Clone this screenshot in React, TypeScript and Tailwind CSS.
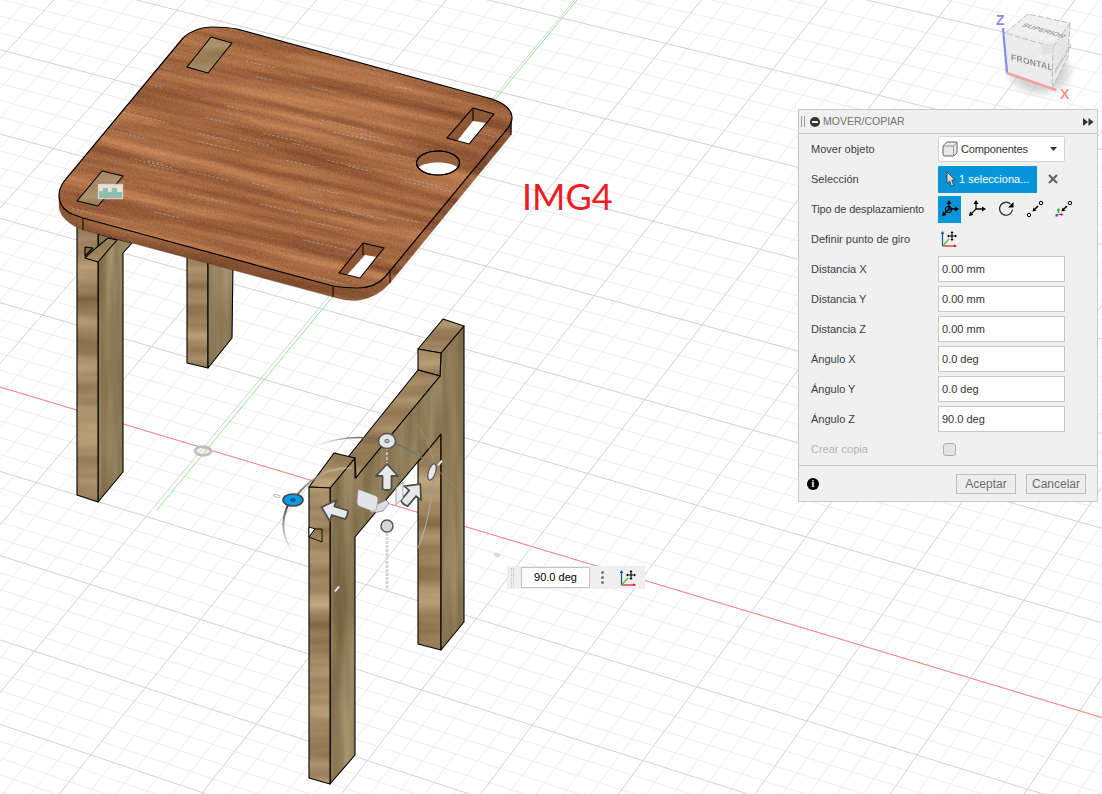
import React from "react";

type P = [number, number];
const W = 1102, H = 794;
const VA: P = [-9000, -2313];
const VB: P = [5700, -6180];

function lineA(k: number) {
  const y500 = 537 + 89 * k;
  const s = (y500 - VA[1]) / (500 - VA[0]);
  return { x1: 0, y1: y500 - 500 * s, x2: W, y2: y500 + (W - 500) * s };
}
function lineB(j: number) {
  const x = 203 + 109.6 * j;
  const sA = (537 - VA[1]) / (500 - VA[0]);
  const y = 537 + (x - 500) * sA;
  const t = (VB[0] - x) / (VB[1] - y);
  return { x1: x + (0 - y) * t, y1: 0, x2: x + (H - y) * t, y2: H };
}

function Grid() {
  const minor: React.ReactElement[] = [];
  const major: React.ReactElement[] = [];
  for (let i = -40; i <= 30; i++) {
    const l = lineA(i / 5);
    (i % 5 === 0 ? major : minor).push(<line key={"a" + i} {...l} />);
  }
  for (let i = -50; i <= 70; i++) {
    const l = lineB(i / 5);
    (i % 5 === 0 ? major : minor).push(<line key={"b" + i} {...l} />);
  }
  const red = lineA(0);
  return (
    <g>
      <g stroke="#eeeeee" strokeWidth="1">{minor}</g>
      <g stroke="#d2d2d2" strokeWidth="1">{major}</g>
      <line {...red} stroke="#fb8686" strokeWidth="1" />
      <line x1="577" y1="0" x2="157" y2="510" stroke="#8cec8c" strokeWidth="1" />
    </g>
  );
}

function pts(p: P[]) {
  return p.map((q) => q.join(",")).join(" ");
}

function Face({ p, fill, shade }: { p: P[]; fill: string; shade?: number }) {
  return (
    <g>
      <polygon points={pts(p)} fill={fill} />
      {shade ? <polygon points={pts(p)} fill="#000" opacity={shade} /> : null}
      <polygon points={pts(p)} fill="none" stroke="#000" strokeWidth="1.1" strokeLinejoin="round" />
    </g>
  );
}

const OPAQUE = "1 0 0 0 0 0 1 0 0 0 0 0 1 0 0 0 0 0 0 1";

function Defs() {
  const matrix = (r: number[], g: number[], b: number[]) =>
    `${r[0]} 0 0 0 ${r[1]} ${g[0]} 0 0 0 ${g[1]} ${b[0]} 0 0 0 ${b[1]} 0 0 0 0 1`;
  return (
    <defs>
      <filter id="fWood" x="0" y="0" width="100%" height="100%" colorInterpolationFilters="sRGB">
        <feTurbulence type="fractalNoise" baseFrequency="0.005 0.085" numOctaves="4" seed="11" />
        <feColorMatrix type="matrix" values={OPAQUE} result="a" />
        <feTurbulence type="fractalNoise" baseFrequency="0.8 0.8" numOctaves="2" seed="4" />
        <feColorMatrix type="matrix" values={OPAQUE} result="b" />
        <feComposite in="a" in2="b" operator="arithmetic" k1="0" k2="0.7" k3="0.45" k4="-0.075" />
        <feColorMatrix type="matrix" values={matrix([0.55, 0.37], [0.48, 0.17], [0.36, 0.08])} />
      </filter>
      <filter id="fTanH" x="0" y="0" width="100%" height="100%" colorInterpolationFilters="sRGB">
        <feTurbulence type="fractalNoise" baseFrequency="0.004 0.045" numOctaves="3" seed="7" />
        <feColorMatrix type="matrix" values={matrix([0.38, 0.45], [0.38, 0.35], [0.36, 0.21])} />
      </filter>
      <filter id="fTanV" x="0" y="0" width="100%" height="100%" colorInterpolationFilters="sRGB">
        <feTurbulence type="fractalNoise" baseFrequency="0.07 0.006" numOctaves="3" seed="21" />
        <feColorMatrix type="matrix" values={matrix([0.3, 0.4], [0.3, 0.33], [0.28, 0.2])} />
      </filter>
      <filter id="fCube" x="-10%" y="-10%" width="120%" height="120%">
        <feGaussianBlur stdDeviation="0.45" />
      </filter>
      <pattern id="wood" patternUnits="userSpaceOnUse" width={W} height={H}>
        <rect x="-200" y="-300" width="1200" height="1000" filter="url(#fWood)" transform="rotate(13 280 160)" />
      </pattern>
      <pattern id="tanH" patternUnits="userSpaceOnUse" width={W} height={H}>
        <rect width={W} height={H} filter="url(#fTanH)" />
      </pattern>
      <pattern id="tanV" patternUnits="userSpaceOnUse" width={W} height={H}>
        <rect width={W} height={H} filter="url(#fTanV)" />
      </pattern>
      <linearGradient id="gA1" gradientUnits="userSpaceOnUse" x1="315" y1="445" x2="468" y2="500">
        <stop offset="0" stopColor="#777" stopOpacity="0" />
        <stop offset="0.25" stopColor="#666" />
        <stop offset="0.65" stopColor="#777" />
        <stop offset="1" stopColor="#999" stopOpacity="0" />
      </linearGradient>
      <linearGradient id="gA2" gradientUnits="userSpaceOnUse" x1="293" y1="500" x2="352" y2="468">
        <stop offset="0" stopColor="#444" />
        <stop offset="1" stopColor="#fff" stopOpacity="0.2" />
      </linearGradient>
      <linearGradient id="gA3" gradientUnits="userSpaceOnUse" x1="290" y1="505" x2="295" y2="553">
        <stop offset="0" stopColor="#444" />
        <stop offset="1" stopColor="#999" stopOpacity="0" />
      </linearGradient>
      <linearGradient id="gA4" gradientUnits="userSpaceOnUse" x1="417" y1="425" x2="418" y2="548">
        <stop offset="0" stopColor="#aaa" stopOpacity="0.2" />
        <stop offset="0.35" stopColor="#888" />
        <stop offset="1" stopColor="#ccc" stopOpacity="0.6" />
      </linearGradient>
      <radialGradient id="cubeShadow">
        <stop offset="0.6" stopColor="#999" stopOpacity="0.5" />
        <stop offset="1" stopColor="#999" stopOpacity="0" />
      </radialGradient>
      <clipPath id="topClip">
        <path d={TOP} />
      </clipPath>
    </defs>
  );
}

const TOP =
  "M212 27 Q226 27 237 29 L492 99 Q512 106 512 118 Q512 122 508 128 L385 277 Q375 288 357 288 Q345 288 333 286 L83 218 L72 214 Q59 208 59 195 Q59 188 65 180 L183 38 Q195 27 212 27 Z";

function GrainDashes() {
  const d: React.ReactElement[] = [];
  for (let i = 0; i < 70; i++) {
    const r1 = Math.abs(Math.sin(i * 12.9898) * 43758.5453) % 1;
    const r2 = Math.abs(Math.sin(i * 78.233) * 12543.123) % 1;
    const r3 = Math.abs(Math.sin(i * 39.425) * 9321.77) % 1;
    const x = 70 + r1 * 420;
    const y = 50 + r2 * 230;
    const len = 15 + r3 * 35;
    d.push(
      <line key={i} x1={x} y1={y} x2={x + len} y2={y + len * 0.23} stroke="#b9b3ad" strokeWidth="0.8" strokeDasharray="3 1.5" opacity="0.7" />
    );
  }
  return <g clipPath="url(#topClip)">{d}</g>;
}

function Table() {
  const side = "M59 195 L59 208 Q62 222 83 230 L333 297 Q350 302 360 300 Q378 297 390 283 L511 135 L512 118 Z";
  return (
    <g>
      <path d={side} fill="url(#wood)" />
      <path d={side} fill="#2a1000" opacity="0.18" stroke="#000" strokeWidth="1.1" />
      <path d={TOP} fill="url(#wood)" />
      <GrainDashes />
      <path d={TOP} fill="none" stroke="#000" strokeWidth="1.2" />
      <line x1="83" y1="218" x2="83" y2="230" stroke="#000" />
      <line x1="333" y1="286" x2="333" y2="297" stroke="#000" />
      <line x1="390" y1="272" x2="390" y2="283" stroke="#000" />
      <line x1="511" y1="122" x2="511" y2="135" stroke="#000" />

      <Face p={[[211, 37], [232, 43], [208, 73], [187, 67]]} fill="url(#tanH)" />
      <Face p={[[102, 171], [123, 176], [98, 206], [77, 201]]} fill="url(#tanH)" />

      <polygon points={pts([[473, 108], [494, 114], [469, 144], [447, 138]])} fill="#8d5635" />
      <polygon points={pts([[473, 121], [486, 123], [469, 144], [457, 141]])} fill="#fff" />
      <polygon points={pts([[473, 108], [494, 114], [469, 144], [447, 138]])} fill="none" stroke="#000" strokeWidth="1.1" />
      <line x1="473" y1="108" x2="473" y2="121" stroke="#000" />

      <polygon points={pts([[363, 243], [384, 248], [360, 278], [339, 273]])} fill="#8d5635" />
      <polygon points={pts([[365, 255], [377, 257], [360, 278], [347, 275]])} fill="#fff" />
      <polygon points={pts([[363, 243], [384, 248], [360, 278], [339, 273]])} fill="none" stroke="#000" strokeWidth="1.1" />
      <line x1="363" y1="243" x2="363" y2="255" stroke="#000" />

      <ellipse cx="438" cy="163" rx="21.5" ry="12" fill="#94603c" stroke="#000" strokeWidth="1.1" />
      <path d="M419 167 C 426 161 450 161 457 167 C 451 177 425 177 419 167 Z" fill="#fff" />
      <ellipse cx="438" cy="163" rx="21.5" ry="12" fill="none" stroke="#000" strokeWidth="1.1" />

      <rect x="98" y="184" width="25" height="15" fill="#f6f1ea" opacity="0.85" stroke="#bbb" strokeWidth="0.6" />
      <path d="M99 191 H103 V188 H108 V192 H112 V188 H117 V192 H122 V198 H99 Z" fill="#84bdaa" opacity="0.9" />
    </g>
  );
}

function LeftLegs() {
  return (
    <g>
      <Face p={[[187, 250], [208, 255], [208, 368], [187, 363]]} fill="url(#tanH)" />
      <Face p={[[208, 255], [233, 262], [232, 338], [208, 368]]} fill="url(#tanV)" />
      <Face p={[[98, 234], [132, 243], [123, 253], [123, 472], [98, 502]]} fill="url(#tanV)" />
      <Face p={[[77, 222], [98, 226], [98, 502], [77, 495]]} fill="url(#tanH)" />
      <Face p={[[85, 247], [93, 248], [85, 256]]} fill="url(#tanV)" />
      <Face p={[[90, 253], [108, 238], [117, 240], [98, 262], [85, 258]]} fill="url(#tanH)" />
    </g>
  );
}

function Frame() {
  return (
    <g>
      <Face p={[[418, 462], [441, 434], [441, 650], [418, 644]]} fill="url(#tanH)" />
      <Face
        p={[[330, 488], [355, 458], [355, 478], [362, 470], [440, 376], [441, 353], [464, 326], [464, 622], [441, 650], [441, 434], [355, 537], [355, 755], [330, 784]]}
        fill="url(#tanV)"
      />
      <Face p={[[418, 349], [443, 319], [464, 326], [441, 353]]} fill="url(#tanH)" />
      <Face p={[[418, 349], [441, 353], [440, 376], [418, 370]]} fill="url(#tanH)" />
      <Face p={[[348, 457], [418, 370], [440, 376], [362, 470], [356, 478], [355, 458]]} fill="url(#tanH)" />
      <Face p={[[309, 487], [334, 453], [355, 458], [330, 488]]} fill="url(#tanH)" />
      <Face p={[[309, 487], [330, 488], [330, 784], [309, 778]]} fill="url(#tanH)" />
      <polygon points={pts([[309, 527], [315, 529], [309, 537]])} fill="#fff" stroke="#000" strokeWidth="0.9" />
      <polygon points={pts([[315, 529], [322, 529], [322, 542], [309, 537]])} fill="url(#tanH)" stroke="#000" strokeWidth="0.9" />
    </g>
  );
}

function Arrow3D({ x, y, a, tail = 12 }: { x: number; y: number; a: number; tail?: number }) {
  return (
    <path
      d={`M0 -13 L11 -1 L4.5 -1 L4.5 ${tail} Q0 ${tail + 2} -4.5 ${tail} L-4.5 -1 L-11 -1 Z`}
      transform={`translate(${x} ${y}) rotate(${a})`}
      fill="#e8e8ea"
      stroke="#4e4e4e"
      strokeWidth="1.8"
      strokeLinejoin="round"
    />
  );
}

function Gizmo() {
  return (
    <g fill="none">
      <path d="M315 446 Q352 432 387 441 Q428 452 468 503" stroke="url(#gA1)" strokeWidth="1.5" />
      <path d="M293 500 Q318 466 352 468" stroke="url(#gA2)" strokeWidth="2" />
      <path d="M289 503 Q275 530 295 555" stroke="url(#gA3)" strokeWidth="2" />
      <path d="M417 425 Q440 455 432 490 Q428 525 418 548" stroke="url(#gA4)" strokeWidth="1.2" />
      <line x1="387" y1="533" x2="387" y2="590" stroke="#d8d8d8" strokeWidth="3" strokeDasharray="3 1" />
      <line x1="387" y1="447" x2="387" y2="466" stroke="#ddd" strokeWidth="2" strokeDasharray="3 2" opacity="0.7" />

      <ellipse cx="387" cy="441" rx="8.5" ry="7.5" fill="#e5e5e5" stroke="#555" strokeWidth="1.5" />
      <ellipse cx="387" cy="441" rx="2.2" ry="1.8" fill="#bbb" stroke="#555" strokeWidth="0.8" />
      <ellipse cx="432" cy="472" rx="3.5" ry="8.5" transform="rotate(18 432 472)" fill="#e8e8e8" stroke="#555" strokeWidth="1.2" />
      <ellipse cx="293" cy="500" rx="10" ry="6" fill="#0a9ae6" stroke="#444" strokeWidth="1.5" />
      <ellipse cx="293" cy="500" rx="2.4" ry="1.4" fill="#0a6fa6" stroke="#033" strokeWidth="0.5" />

      <Arrow3D x={387} y={477} a={0} />
      <Arrow3D x={334} y={511} a={-73} tail={13} />
      <Arrow3D x={412} y={494} a={40} />

      <polygon points="396,488 403,482 403,498 396,505" fill="#eee" stroke="#888" strokeWidth="0.7" />
      <path d="M370 508 L386 500 L389 503 L383 511 Q377 513 370 512 Z" fill="#dcdde0" stroke="#777" strokeWidth="0.7" />
      <path d="M360 490 L376 496 Q378 497 378 500 L376 510 Q375 512 372 511 L359 506 Q357 505 357 502 L358 491 Q358 489 360 490 Z" fill="#e4e5e8" stroke="#999" strokeWidth="0.7" />

      <circle cx="387" cy="526" r="6" fill="#d8d8d8" stroke="#555" strokeWidth="1.5" />

      <rect x="-3.5" y="-1" width="7" height="2" rx="1" transform="translate(440 463) rotate(-50)" fill="#fff" stroke="#888" strokeWidth="0.6" />
      <rect x="-3.5" y="-1" width="7" height="2" rx="1" transform="translate(337 589) rotate(-50)" fill="#fff" stroke="#888" strokeWidth="0.6" />
      <rect x="-3" y="-1.2" width="6" height="2.4" rx="1" transform="translate(277 496) rotate(15)" fill="#fff" stroke="#999" strokeWidth="0.6" />
      <rect x="-2.5" y="-1" width="5" height="2" rx="1" transform="translate(497 555) rotate(15)" fill="#fff" stroke="#999" strokeWidth="0.6" />

      <ellipse cx="203" cy="451" rx="8" ry="4.5" fill="#d8d8d8" fillOpacity="0.4" stroke="#bdbdbd" strokeWidth="2.6" />
    </g>
  );
}

function ViewCube() {
  return (
    <g filter="url(#fCube)" opacity="0.85">
      <ellipse cx="1040" cy="72" rx="36" ry="26" fill="url(#cubeShadow)" />
      <polygon points={pts([[1005, 33], [1053, 47], [1052, 88], [1007, 73]])} fill="#e9e9e9" />
      <polygon points={pts([[1005, 33], [1028, 14], [1070, 23], [1053, 47]])} fill="#eeeeee" />
      <polygon points={pts([[1053, 47], [1070, 23], [1068, 57], [1052, 88]])} fill="#e4e4e4" />
      <g fill="none" stroke="#a8a8a8" strokeWidth="0.9" strokeDasharray="6 2">
        <polyline points={pts([[1005, 33], [1028, 14], [1070, 23], [1053, 47], [1005, 33]])} />
        <polyline points={pts([[1070, 23], [1068, 57], [1052, 88]])} />
        <line x1="1053" y1="47" x2="1052" y2="88" />
      </g>
      <rect x="1042" y="44" width="11" height="10" fill="#dcdcdc" opacity="0.8" />
      <text transform="matrix(1 0.29 -0.75 0.55 1021 26)" fontFamily="'Liberation Sans',sans-serif" fontSize="8" fontWeight="700" fill="#8f8f8f">SUPERIOR</text>
      <text transform="matrix(1 0.25 0 1 1011 60)" fontFamily="'Liberation Sans',sans-serif" fontSize="8.5" fontWeight="700" fill="#7e7e7e" letterSpacing="0.3">FRONTAL</text>
      <text transform="matrix(0.5 -0.85 0 1 1055 74)" fontFamily="'Liberation Sans',sans-serif" fontSize="6.5" fontWeight="700" fill="#a5a5a5">DERECHA</text>
      <line x1="1003" y1="28" x2="1007" y2="73" stroke="#6f76ee" strokeWidth="2.2" />
      <line x1="1007" y1="73" x2="1056" y2="90" stroke="#f09090" strokeWidth="2.6" />
      <text x="996" y="25" fontFamily="'Liberation Sans',sans-serif" fontSize="14" fontWeight="700" fill="#6f76ee">Z</text>
      <text x="1060" y="99" fontFamily="'Liberation Sans',sans-serif" fontSize="14" fontWeight="700" fill="#f28080">X</text>
    </g>
  );
}

const Head = ({ d }: { d: string }) => <path d={d} fill="#000" />;

function MoveIcon({ circle }: { circle?: boolean }) {
  return (
    <svg width="18" height="18" viewBox="0 0 18 18" fill="none">
      <path d="M8 9 V3 M8 9 H15 M8 9 L3 14" stroke="#000" strokeWidth="1.3" />
      <Head d="M8 0 L10.5 4 H5.5 Z" />
      <Head d="M18 9 L14 6.5 V11.5 Z" />
      <Head d="M1 16 L2 11.5 L5.5 15 Z" />
      {circle ? <circle cx="7.5" cy="9.5" r="3" stroke="#000" strokeWidth="1.1" /> : null}
    </svg>
  );
}

function RotateIcon() {
  return (
    <svg width="18" height="18" viewBox="0 0 18 18" fill="none">
      <path d="M13.5 4 A6.5 6.5 0 1 0 15.5 9.5" stroke="#222" strokeWidth="1.2" />
      <Head d="M16.5 2 V7.5 H11 Z" />
    </svg>
  );
}

function PointIcon({ rgb }: { rgb?: boolean }) {
  return (
    <svg width="18" height="18" viewBox="0 0 18 18" fill="none">
      <circle cx="15" cy="3" r="1.7" stroke="#000" strokeWidth="1" />
      {rgb ? (
        <g>
          <path d="M3.5 13 V9.5" stroke="#22aa22" strokeWidth="1.4" />
          <path d="M3.5 8 L5.3 10.5 H1.7 Z" fill="#22aa22" />
          <path d="M3.5 14.5 H7" stroke="#d22" strokeWidth="1.2" />
          <path d="M8.5 14.5 L6 13 V16 Z" fill="#d22" />
          <rect x="0.5" y="14" width="2.5" height="2.5" fill="#1a6fd0" />
        </g>
      ) : (
        <circle cx="3" cy="15" r="1.7" stroke="#000" strokeWidth="1" />
      )}
      <path d="M12 6 L9 9" stroke="#000" strokeWidth="1.6" />
      <Head d="M6.5 11.5 L7.5 7.5 L10.5 10.5 Z" />
    </svg>
  );
}

function PivotIcon({ size = 16 }: { size?: number }) {
  return (
    <svg width={size} height={size} viewBox="0 0 16 16" fill="none">
      <path d="M1.5 15 V2" stroke="#15559a" strokeWidth="1.2" />
      <path d="M1.5 0 L3.3 3 H-0.3 Z" fill="#15559a" />
      <path d="M1.5 15 H14" stroke="#d11f26" strokeWidth="1.2" />
      <path d="M16 15 L13 13.2 V16.8 Z" fill="#d11f26" />
      <path d="M2 14.5 L8 8" stroke="#55c22b" strokeWidth="1.4" />
      <path d="M11 1 V9 M7 5 H15" stroke="#000" strokeWidth="1.1" />
      <path d="M11 0 L12.6 2 H9.4 Z M11 10 L12.6 8 H9.4 Z M6 5 L8 3.4 V6.6 Z M16 5 L14 3.4 V6.6 Z" fill="#000" />
    </svg>
  );
}

function CubeSmall() {
  return (
    <svg width="16" height="16" viewBox="0 0 16 16" fill="none">
      <path d="M1 6 Q1 4.5 2.3 3.5 L4 1.8 Q4.7 1 6 1 H14 Q15 1 15 2 V11 Q15 12 14 13 L12.5 14.4 Q11.8 15 11 15 H3 Q1 15 1 13 Z" fill="#e9e9e9" stroke="#555" strokeWidth="0.9" />
      <path d="M1.5 5 H11.5 L15 1.5 M11.5 5 V15" stroke="#777" strokeWidth="0.7" />
    </svg>
  );
}

function Row({ label, children, dim, cls }: { label: string; children?: React.ReactNode; dim?: boolean; cls?: string }) {
  return (
    <div className="flex h-[30px] items-center pl-[12px]">
      <div className={dim ? "w-[127px] text-[#b4b4b4]" : "w-[127px] text-[#3a3f45]"}>
        <span className={cls}>{label}</span>
      </div>
      {children}
    </div>
  );
}

function Field({ value }: { value: string }) {
  return (
    <div className="flex h-[26px] w-[127px] items-center border border-[#c6c6c6] bg-white pl-[3px] text-[#333]">
      {value}
    </div>
  );
}

function Panel() {
  return (
    <div className="absolute left-[798px] top-[109px] flex h-[393px] w-[300px] flex-col border border-[#c8c8c8] bg-[#f0f0f0] font-['Liberation_Sans',sans-serif] text-[11px]">
      <div className="flex h-[24px] shrink-0 items-center border-b border-[#c8c8c8] pl-[2px] pr-[3px]">
        <div className="h-[11px] w-[4px] border-x border-[#999]" />
        <div className="ml-[5px] flex h-[10px] w-[10px] items-center justify-center rounded-full bg-[#333]">
          <div className="h-[2px] w-[6px] bg-[#eee]" />
        </div>
        <div className="ml-[3px] flex-1 text-[10.5px] text-[#737373]">MOVER/COPIAR</div>
        <svg width="11" height="8" viewBox="0 0 11 8">
          <path d="M0 0 L5 4 L0 8 Z M5.5 0 L10.5 4 L5.5 8 Z" fill="#333" />
        </svg>
      </div>
      <Row label="Mover objeto">
        <div className="flex h-[26px] w-[127px] items-center rounded-[2px] border border-[#d4d4d4] bg-white pl-[3px] pr-[7px] text-[#333]">
          <CubeSmall />
          <span className="ml-[3px] flex-1 tracking-[-0.15px]">Componentes</span>
          <svg width="7" height="4" viewBox="0 0 7 4">
            <path d="M0 0 H7 L3.5 4 Z" fill="#333" />
          </svg>
        </div>
      </Row>
      <Row label="Selección">
        <div className="flex h-[27px] w-[99px] items-center rounded-[1px] bg-[#0696d7] pl-[8px] text-white">
          <svg width="10" height="16" viewBox="0 0 10 16">
            <path d="M1 1 L9 9 L5.8 9 L7.5 14 L5.3 15 L3.6 10 L1 12.5 Z" fill="#ddd" stroke="#333" strokeWidth="0.8" />
          </svg>
          <span className="ml-[3px]">1 selecciona...</span>
        </div>
        <svg className="ml-[11px]" width="10" height="10" viewBox="0 0 10 10">
          <path d="M1 1 L9 9 M9 1 L1 9" stroke="#666" strokeWidth="2.2" />
        </svg>
      </Row>
      <Row label="Tipo de desplazamiento" cls="tracking-[-0.15px]">
        <div className="flex items-center">
          <div className="flex h-[27px] w-[23px] items-center justify-center bg-[#0696d7]">
            <MoveIcon circle />
          </div>
          <div className="ml-[7px] flex w-[18px] justify-center"><MoveIcon /></div>
          <div className="ml-[11px] flex w-[18px] justify-center"><RotateIcon /></div>
          <div className="ml-[11px] flex w-[18px] justify-center"><PointIcon /></div>
          <div className="ml-[11px] flex w-[18px] justify-center"><PointIcon rgb /></div>
        </div>
      </Row>
      <Row label="Definir punto de giro">
        <div className="ml-[3px]"><PivotIcon /></div>
      </Row>
      <Row label="Distancia X"><Field value="0.00 mm" /></Row>
      <Row label="Distancia Y"><Field value="0.00 mm" /></Row>
      <Row label="Distancia Z"><Field value="0.00 mm" /></Row>
      <Row label="Ángulo X"><Field value="0.0 deg" /></Row>
      <Row label="Ángulo Y"><Field value="0.0 deg" /></Row>
      <Row label="Ángulo Z"><Field value="90.0 deg" /></Row>
      <Row label="Crear copia" dim>
        <div className="ml-[5px] h-[13px] w-[13px] rounded-[3px] border border-[#b0b0b0] bg-[#e4e4e4]" />
      </Row>
      <div className="mt-[1px] flex flex-1 items-center border-t border-[#c8c8c8] pl-[8px] pr-[11px]">
        <div className="flex h-[12px] w-[12px] items-center justify-center rounded-full bg-black font-['Liberation_Serif',serif] text-[10px] font-bold text-white">i</div>
        <div className="flex-1" />
        <div className="flex h-[20px] w-[60px] items-center justify-center border border-[#bdbdbd] bg-[#ededed] text-[12px] text-[#6d6d6d]">Aceptar</div>
        <div className="ml-[10px] flex h-[20px] w-[60px] items-center justify-center border border-[#bdbdbd] bg-[#ededed] text-[12px] text-[#6d6d6d]">Cancelar</div>
      </div>
    </div>
  );
}

function ValueBar() {
  return (
    <div className="absolute left-[507px] top-[566px] flex h-[23px] w-[138px] items-center bg-[#efefef] font-['Liberation_Sans',sans-serif] text-[11px] text-black">
      <div className="ml-[4px] h-[20px] w-[3px] border-x border-dotted border-[#c4c4c4]" />
      <div className="ml-[7px] flex h-[21px] w-[69px] items-center justify-center border border-[#c4c4c4] bg-white">90.0 deg</div>
      <div className="ml-[11px] flex flex-col gap-[2px]">
        <div className="h-[3px] w-[3px] rounded-full bg-[#777]" />
        <div className="h-[3px] w-[3px] rounded-full bg-[#777]" />
        <div className="h-[3px] w-[3px] rounded-full bg-[#777]" />
      </div>
      <div className="ml-[16px]"><PivotIcon /></div>
    </div>
  );
}

export default function App() {
  return (
    <div className="relative h-[794px] w-[1102px] overflow-hidden bg-white">
      <svg className="absolute inset-0" width={W} height={H} viewBox={`0 0 ${W} ${H}`}>
        <Defs />
        <Grid />
        <LeftLegs />
        <Table />
        <Frame />
        <Gizmo />
        <ViewCube />
      </svg>
      <div className="absolute left-[522px] top-[174px] font-['Lato',sans-serif] text-[36px] leading-[44px] text-[#ed1c24]">IMG4</div>
      <Panel />
      <ValueBar />
    </div>
  );
}
